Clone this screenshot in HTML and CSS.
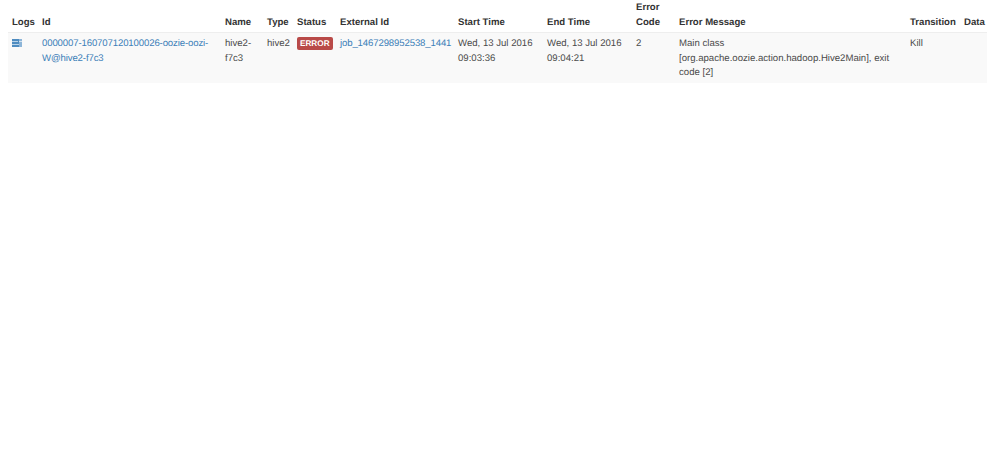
FILE: index.html
```html
<!DOCTYPE html>
<html lang="en">
<head>
<meta charset="utf-8">
<title>Workflow actions</title>
<link rel="stylesheet" href="styles.css">
</head>
<body>
<table class="actions">
<colgroup>
<col class="c-logs"><col class="c-id"><col class="c-name"><col class="c-type"><col class="c-status"><col class="c-ext"><col class="c-start"><col class="c-end"><col class="c-code"><col class="c-msg"><col class="c-trans"><col class="c-data">
</colgroup>
<thead>
<tr>
<th>Logs</th><th>Id</th><th>Name</th><th>Type</th><th>Status</th><th>External Id</th><th>Start Time</th><th>End Time</th><th>Error Code</th><th>Error Message</th><th>Transition</th><th>Data</th>
</tr>
</thead>
<tbody>
<tr>
<td><svg class="log-icon" width="10" height="8" viewBox="0 0 10 8" aria-hidden="true"><rect width="10" height="8" fill="#4f8cc0"/><rect x="7" width="3" height="8" fill="#8db5d8"/><rect x="0" y="2" width="6" height="1" fill="#b9d3e8"/><rect x="7" y="2" width="3" height="1" fill="#d5e4f0"/><rect x="0" y="5" width="7" height="1" fill="#b9d3e8"/></svg></td>
<td><a href="#">0000007-160707120100026-oozie-oozi-W@hive2-f7c3</a></td>
<td>hive2-f7c3</td>
<td>hive2</td>
<td><span class="label">ERROR</span></td>
<td><a href="#">job_1467298952538_1441</a></td>
<td>Wed, 13 Jul 2016 09:03:36</td>
<td>Wed, 13 Jul 2016 09:04:21</td>
<td>2</td>
<td>Main class [org.apache.oozie.action.hadoop.Hive2Main], exit code [2]</td>
<td>Kill</td>
<td></td>
</tr>
</tbody>
</table>
</body>
</html>
```
FILE: styles.css
```css
html, body {
  margin: 0;
  background: #fff;
}
body {
  padding: 0 12px 0 8px;
  font-family: "Liberation Sans", Arial, sans-serif;
  font-size: 9.6px;
  line-height: 14.5px;
  color: #4a4a4a;
  text-rendering: geometricPrecision;
}
.actions {
  width: 979px;
  table-layout: fixed;
  border-collapse: collapse;
}
.c-logs { width: 30px; }
.c-id { width: 183px; }
.c-name { width: 42px; }
.c-type { width: 30px; }
.c-status { width: 43px; }
.c-ext { width: 118px; }
.c-start { width: 89px; }
.c-end { width: 89px; }
.c-code { width: 43px; }
.c-msg { width: 231px; }
.c-trans { width: 54px; }
.c-data { width: 27px; }
.actions th {
  padding: 1px 2px 2px 4px;
  text-align: left;
  vertical-align: bottom;
  font-weight: bold;
  color: #333;
  border-bottom: 1px solid #eee;
}
.actions td {
  padding: 4px 2px 2px 4px;
  vertical-align: top;
  background: #f9f9f9;
}
.actions a {
  color: #3c80b8;
  text-decoration: none;
  letter-spacing: -0.13px;
}
.log-icon {
  display: block;
  margin-top: 2px;
}
.label {
  display: inline-block;
  padding: 2px 3px;
  font-size: 8.2px;
  line-height: 9px;
  font-weight: bold;
  color: #fff;
  background: #b94a48;
  border-radius: 2px;
}
```
